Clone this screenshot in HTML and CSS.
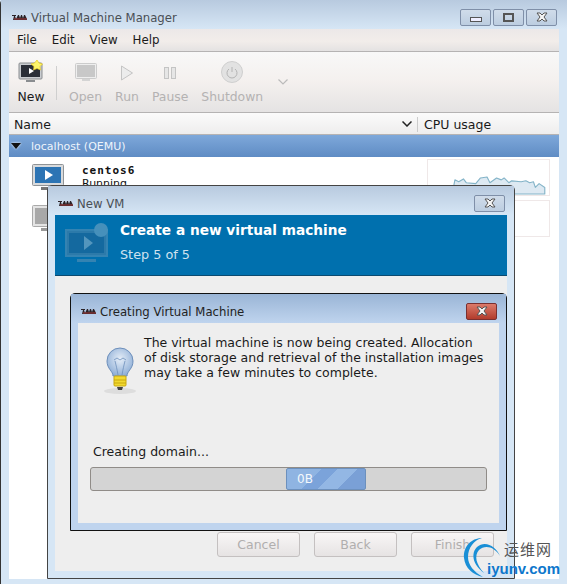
FILE: index.html
```html
<!DOCTYPE html>
<html lang="en">
<head>
    <meta charset="UTF-8">
    <meta name="viewport" content="width=device-width, initial-scale=1.0">
    <title>Virtual Machine Manager</title>
    <link rel="stylesheet" href="styles.css">
</head>
<body>
    <svg class="defs" width="0" height="0">
        <symbol id="wm-logo" viewBox="0 0 16 6">
            <path d="M0 1h4v1H3l1 3 2-4h1l1 3 1-3h1l1 3 1-3h1l2 4v1H1l1-4H0z" fill="#2a2226"/>
            <path d="M2 4.500h13v1H2z" fill="#a83838"/>
        </symbol>
        <symbol id="x-glyph" viewBox="0 0 12 10">
            <path d="M1 1h3l2 2 2-2h3L8 5l3 4H8L6 7 4 9H1l3-4z" fill="#f4f4f4" stroke="#555" stroke-width="1"/>
        </symbol>
    </svg>

    <!-- main window -->
    <div class="window main-window">
        <div class="titlebar">
            <svg class="wm-icon"><use href="#wm-logo"/></svg>
            <span class="title-text">Virtual Machine Manager</span>
            <div class="wm-buttons">
                <div class="wm-btn"><span class="glyph-min"></span></div>
                <div class="wm-btn"><span class="glyph-max"></span></div>
                <div class="wm-btn"><svg class="glyph-x"><use href="#x-glyph"/></svg></div>
            </div>
        </div>
        <div class="window-body">
            <div class="menubar">
                <span>File</span><span>Edit</span><span>View</span><span>Help</span>
            </div>
            <div class="toolbar">
                <div class="tool tool-new">
                    <svg width="26" height="26" viewBox="0 0 26 26">
                        <rect x="1" y="3" width="23" height="16" rx="1" fill="#c9ccd0" stroke="#8a8d90"/>
                        <rect x="3" y="5" width="19" height="12" fill="#2b2f38"/>
                        <path d="M11 8l5 3-5 3z" fill="#fff"/>
                        <rect x="8" y="20" width="9" height="2" fill="#8a8d90"/>
                        <path d="M19 0l2 3 3.500 1-2.500 2.500.5 3.500-3.500-1.500-3.500 1.500.5-3.500L13 4l3.500-1z" fill="#fdf56a" stroke="#e6c820" stroke-width=".7"/>
                    </svg>
                    <span>New</span>
                </div>
                <div class="tool-sep"></div>
                <div class="tool tool-off">
                    <svg width="24" height="26" viewBox="0 0 24 26">
                        <rect x="1.500" y="3.500" width="21" height="15" rx="1" fill="#eee" stroke="#ccc"/>
                        <rect x="3" y="5" width="18" height="12" fill="#c8c8c8"/>
                        <rect x="8" y="19" width="8" height="2" fill="#d4d4d4"/>
                    </svg>
                    <span>Open</span>
                </div>
                <div class="tool tool-off">
                    <svg width="16" height="26" viewBox="0 0 16 26"><path d="M2.500 6l11 7-11 7z" fill="#ececec" stroke="#c4c4c4"/></svg>
                    <span>Run</span>
                </div>
                <div class="tool tool-off">
                    <svg width="16" height="26" viewBox="0 0 16 26">
                        <rect x="2.500" y="7.500" width="4" height="11" fill="#e6e6e6" stroke="#c4c4c4"/>
                        <rect x="9.500" y="7.500" width="4" height="11" fill="#e6e6e6" stroke="#c4c4c4"/>
                    </svg>
                    <span>Pause</span>
                </div>
                <div class="tool tool-off">
                    <svg width="24" height="26" viewBox="0 0 24 26">
                        <circle cx="12" cy="12" r="10.500" fill="#e2e2e2" stroke="#cfcfcf"/>
                        <path d="M9 9a5 5 0 1 0 6 0M12 7v5" fill="none" stroke="#b4b4b4"/>
                    </svg>
                    <span>Shutdown</span>
                </div>
                <svg class="tool-more" width="10" height="6" viewBox="0 0 10 6"><path d="M.500.500l4.500 4.500 4.500-4.500" fill="none" stroke="#bbb" stroke-width="1.200"/></svg>
            </div>
            <div class="list-header">
                <span class="col-name">Name</span>
                <svg width="10" height="6" viewBox="0 0 10 6"><path d="M.500.500l4.500 4.500 4.500-4.500" fill="none" stroke="#222" stroke-width="1.500"/></svg>
                <span class="col-cpu">CPU usage</span>
            </div>
            <div class="group-row">
                <span class="expander"></span>
                <span>localhost (QEMU)</span>
            </div>
            <div class="vm-row">
                <svg class="vm-icon" width="33" height="28" viewBox="0 0 33 28">
                    <rect x=".5" y=".5" width="31" height="21" rx="1" fill="#d8dadc" stroke="#8f9396"/>
                    <rect x="3" y="3" width="26" height="16" fill="#2c74b4"/>
                    <path d="M13 6l8 5-8 5z" fill="#fff"/>
                    <rect x="9" y="23" width="13" height="3" fill="#777"/>
                </svg>
                <div class="vm-text">
                    <div class="vm-name">centos6</div>
                    <div class="vm-state">Running</div>
                </div>
                <svg class="cpu-graph" width="123" height="37" viewBox="0 0 123 37">
                    <path d="M25 36V26l1-5 4 2 5-3 3 4 10 1 5-6 7-1 3 6 7-5 5 2 3-2 5 5 3-2 10 1 5-1 4 2 4-1 2 6 4-4 6 4v7z" fill="#dde9f2" stroke="#84b4c8" stroke-width="1.200" stroke-linejoin="round"/>
                </svg>
            </div>
            <div class="vm-row">
                <svg class="vm-icon" width="33" height="28" viewBox="0 0 33 28">
                    <rect x=".5" y=".5" width="31" height="21" rx="1" fill="#e4e4e4" stroke="#aaa"/>
                    <rect x="3" y="3" width="26" height="16" fill="#a8a8a8"/>
                    <rect x="9" y="23" width="13" height="3" fill="#999"/>
                </svg>
                <div class="cpu-empty"></div>
            </div>
        </div>
    </div>

    <!-- New VM wizard -->
    <div class="window wizard-window">
        <div class="titlebar">
            <svg class="wm-icon"><use href="#wm-logo"/></svg>
            <span class="title-text">New VM</span>
            <div class="wm-buttons">
                <div class="wm-btn"><svg class="glyph-x"><use href="#x-glyph"/></svg></div>
            </div>
        </div>
        <div class="window-body wizard-body">
            <div class="banner">
                <svg class="banner-icon" width="46" height="42" viewBox="0 0 46 42">
                    <rect x="1" y="9" width="41" height="26" fill="#2c7aaa" stroke="#3483b2" stroke-width="2"/>
                    <rect x="4" y="12" width="35" height="20" fill="#14699f"/>
                    <path d="M19 15l9 7-9 7z" fill="#5496bd"/>
                    <rect x="12" y="38" width="19" height="3" fill="#3483b2"/>
                    <circle cx="36" cy="9" r="7" fill="#4690bb"/>
                </svg>
                <div>
                    <div class="banner-title">Create a new virtual machine</div>
                    <div class="banner-step">Step 5 of 5</div>
                </div>
            </div>
            <div class="wizard-space"></div>
            <div class="wizard-buttons">
                <div class="btn">Cancel</div>
                <div class="btn">Back</div>
                <div class="btn">Finish</div>
            </div>
        </div>
    </div>

    <!-- progress dialog -->
    <div class="window progress-window">
        <div class="titlebar">
            <svg class="wm-icon"><use href="#wm-logo"/></svg>
            <span class="title-text">Creating Virtual Machine</span>
            <div class="wm-buttons">
                <div class="wm-btn wm-btn-close"><svg class="glyph-x"><use href="#x-glyph"/></svg></div>
            </div>
        </div>
        <div class="window-body progress-body">
            <div class="message">
                <svg class="bulb" width="34" height="48" viewBox="0 0 34 48">
                    <defs>
                        <radialGradient id="glass" cx=".5" cy=".4" r=".6">
                            <stop offset="0" stop-color="#e6eef8"/>
                            <stop offset="1" stop-color="#8eaed6"/>
                        </radialGradient>
                    </defs>
                    <ellipse cx="17" cy="44" rx="16" ry="3" fill="#ddd"/>
                    <path d="M10 29c0-5-6-7-6-15a13 13 0 0 1 26 0c0 8-6 10-6 15z" fill="url(#glass)" stroke="#6d8fbb"/>
                    <path d="M12 14c1 4 2 8 3 14M22 14c-1 4-2 8-3 14M11 13l3-2 3 2 3-2 3 2" fill="none" stroke="#6d8fbb" stroke-width=".8"/>
                    <rect x="11" y="29" width="12" height="10" rx="1" fill="#f2d92e" stroke="#c9a80f"/>
                    <path d="M11 33h12M11 36h12" stroke="#c9a80f"/>
                    <path d="M14 40h6l-1 3h-4z" fill="#444"/>
                </svg>
                <p>The virtual machine is now being created. Allocation of disk storage and retrieval of the installation images may take a few minutes to complete.</p>
            </div>
            <div class="progress-label">Creating domain...</div>
            <div class="progress-track">
                <div class="progress-fill">0B</div>
            </div>
        </div>
    </div>

    <!-- site watermark -->
    <div class="watermark">
        <svg width="38" height="44" viewBox="0 0 38 44">
            <path d="M19 1C8 1 0 10 1 21c1 10 9 17 19 19-9-5-15-12-15-20C5 11 11 3 19 1z" fill="#1a8fd6"/>
            <path d="M37 19C33 9 22 3 14 10 8 16 9 27 21 36 13 27 11 19 16 13c6-6 16-3 21 6z" fill="#1a8fd6"/>
        </svg>
        <span class="wm-cn">运维网</span>
        <span class="wm-en">iyunv.com</span>
    </div>
</body>
</html>
```

FILE: styles.css
```css
html, body {
    margin: 0;
    padding: 0;
}
body {
    position: relative;
    width: 567px;
    height: 584px;
    overflow: hidden;
    font-family: "DejaVu Sans", sans-serif;
    font-size: 12px;
    color: #1a1a1a;
    background-color: #d6e6f5;
}
.defs {
    position: absolute;
}
.window {
    position: absolute;
    box-sizing: border-box;
    display: flex;
    flex-direction: column;
    background-color: #d6e6f5;
}
.main-window {
    left: 0;
    top: 0;
    width: 567px;
    height: 584px;
    padding: 0 8px 5px;
    border-left: 1px solid #333;
    border-radius: 4px 4px 0 0;
}
.wizard-window {
    left: 47px;
    top: 185px;
    width: 468px;
    height: 394px;
    padding: 0 7px 7px;
    border: 1px solid #444;
    border-radius: 5px 5px 0 0;
}
.progress-window {
    left: 70px;
    top: 293px;
    width: 437px;
    height: 238px;
    padding: 0 7px 7px;
    border: 1px solid #111;
    border-radius: 5px 5px 0 0;
    background-color: #bfd4ee;
}
.titlebar {
    box-sizing: border-box;
    display: flex;
    align-items: center;
    flex: none;
    height: 29px;
    margin: 0 -8px;
    padding: 5px 10px 0 11px;
    background: linear-gradient(#b8cadf, #d6e6f5);
    color: #4a4f55;
}
.wizard-window .titlebar {
    margin: 0 -7px;
    padding-left: 10px;
    padding-right: 9px;
}
.progress-window .titlebar {
    margin: 0 -7px;
    padding-left: 10px;
    padding-right: 9px;
    background: linear-gradient(#9ab5d6, #bfd4ee);
    color: #222;
}
.title-text {
    position: relative;
    top: 1px;
    font-size: 11.700px;
}
.wm-icon {
    width: 16px;
    height: 6px;
    margin-right: 3px;
}
.wm-buttons {
    display: flex;
    gap: 2px;
    margin-left: auto;
}
.wm-btn {
    box-sizing: border-box;
    display: flex;
    align-items: center;
    justify-content: center;
    width: 31px;
    height: 17px;
    border: 1px solid #7f8fa8;
    border-radius: 2px;
    background: linear-gradient(#d0dcea, #bccde0);
}
.wm-btn-close {
    border-color: #7a3030;
    background: linear-gradient(#dc7a6a, #b23c2c);
}
.glyph-min {
    width: 10px;
    height: 3px;
    margin-top: 4px;
    border: 1px solid #555;
    background-color: #eef;
}
.glyph-max {
    box-sizing: border-box;
    width: 11px;
    height: 9px;
    border: 2px solid #555;
}
.glyph-x {
    width: 12px;
    height: 10px;
}
.window-body {
    flex: 1;
    min-height: 0;
    display: flex;
    flex-direction: column;
    background-color: #fff;
}
.menubar {
    display: flex;
    gap: 15px;
    align-items: center;
    height: 22px;
    padding-left: 8px;
    font-size: 11.800px;
    border-bottom: 1px solid #b5b3b3;
    background: linear-gradient(#ece8e8, #f2edea 55%, #e4e2e2);
}
.toolbar {
    display: flex;
    align-items: flex-start;
    gap: 13px;
    height: 60px;
    border-bottom: 1px solid #b5b3b3;
    background: linear-gradient(#f8f8f8, #f4f0ee 50%, #e5e3e3);
}
.tool {
    display: flex;
    flex-direction: column;
    align-items: center;
    margin-top: 8px;
    font-size: 12.400px;
}
.tool svg {
    height: 26px;
    margin-bottom: 3px;
}
.tool-new {
    width: 44px;
}
.tool-off {
    color: #b4b2b2;
}
.tool-sep {
    width: 1px;
    height: 34px;
    margin: 14px -1px 0 -10px;
    background-color: #cfcfcf;
}
.tool-more {
    margin: 27px 0 0 2px;
}
.list-header {
    box-sizing: content-box;
    display: flex;
    align-items: center;
    height: 20px;
    padding-top: 1px;
    font-size: 12.500px;
    background: linear-gradient(#fbfbfb, #eeeded);
    border-bottom: 1px solid #b5b3b3;
}
.col-name {
    flex: 1;
    padding-left: 5px;
}
.col-cpu {
    width: 142px;
    box-sizing: border-box;
    margin-left: 5px;
    padding-left: 6px;
    border-left: 1px solid #ccc;
}
.group-row {
    display: flex;
    align-items: center;
    height: 22px;
    font-size: 11px;
    color: #eef4fb;
    background: linear-gradient(#7ea8da, #5f8cc4);
}
.expander {
    width: 0;
    height: 0;
    margin: 0 10px 0 2px;
    border-left: 5px solid transparent;
    border-right: 5px solid transparent;
    border-top: 6px solid #111;
    filter: drop-shadow(0 0 1px #fff);
}
.vm-row {
    display: flex;
    align-items: flex-start;
    height: 34px;
    padding: 7px 9px 0 23px;
}
.vm-icon {
    flex: none;
}
.vm-text {
    flex: 1;
    margin-left: 17px;
    line-height: 13px;
    font-size: 11px;
    color: #111;
}
.vm-name {
    font-family: "DejaVu Sans Mono", monospace;
    font-weight: bold;
    letter-spacing: 1px;
}
.cpu-graph, .cpu-empty {
    flex: none;
    box-sizing: border-box;
    width: 123px;
    height: 37px;
    margin-top: -5px;
    border: 1px solid #efe8e8;
}
.cpu-empty {
    margin-left: auto;
}
.wizard-body {
    background-color: #eee;
}
.banner {
    display: flex;
    gap: 9px;
    height: 61px;
    box-sizing: border-box;
    padding: 4px 0 0 10px;
    background-color: #0070ae;
    border-bottom: 1px solid #0b4a70;
    color: #fff;
}
.banner-icon {
    margin-top: 2px;
}
.banner-title {
    font-size: 13.700px;
    font-weight: bold;
    line-height: 22px;
}
.banner-step {
    margin-top: 6px;
    color: #cfe2ef;
    font-size: 12.800px;
}
.wizard-space {
    flex: 1;
}
.wizard-buttons {
    display: flex;
    justify-content: flex-end;
    gap: 14px;
    padding: 0 13px 14px 0;
}
.btn {
    box-sizing: border-box;
    width: 83px;
    height: 25px;
    line-height: 23px;
    text-align: center;
    color: #b0aeae;
    font-size: 12.500px;
    border: 1px solid #c4c0c0;
    border-radius: 3px;
    background: linear-gradient(#f8f6f6, #e6e3e3);
}
.progress-body {
    background-color: #eee;
}
.message {
    display: flex;
    gap: 7px;
    padding: 12px 0 0 25px;
}
.bulb {
    flex: none;
    margin-top: 12px;
}
.message p {
    margin: 0;
    width: 344px;
    font-size: 12.500px;
    line-height: 15px;
    color: #1a1a1a;
}
.progress-label {
    margin: 49px 0 0 15px;
    font-size: 12.500px;
}
.progress-track {
    box-sizing: border-box;
    width: 397px;
    height: 24px;
    margin: 8px 0 0 12px;
    border: 1px solid #908c88;
    border-radius: 3px;
    background-color: #d4d4d4;
}
.progress-fill {
    box-sizing: border-box;
    width: 80px;
    height: 22px;
    margin-left: 195px;
    padding-left: 10px;
    line-height: 21px;
    color: #f4f8fc;
    font-size: 12px;
    border: 1px solid #6c90bd;
    border-radius: 2px;
    background: linear-gradient(135deg, #8fb4e2 0 35%, #7ba3da 35% 52%, #93b7e4 52% 72%, #7aa0d6 72%);
}
.watermark {
    position: absolute;
    left: 463px;
    top: 537px;
    width: 104px;
    height: 47px;
}
.watermark svg {
    position: absolute;
    left: 0;
    top: 0;
}
.wm-cn {
    position: absolute;
    left: 41px;
    top: 3px;
    font-family: "Noto Sans CJK SC", sans-serif;
    font-size: 15px;
    letter-spacing: 1px;
    line-height: 18px;
    color: #555;
}
.wm-en {
    position: absolute;
    left: 24px;
    top: 23px;
    font-family: "Liberation Sans", sans-serif;
    font-weight: bold;
    font-size: 15px;
    line-height: 18px;
    color: #0d77cc;
}
```
